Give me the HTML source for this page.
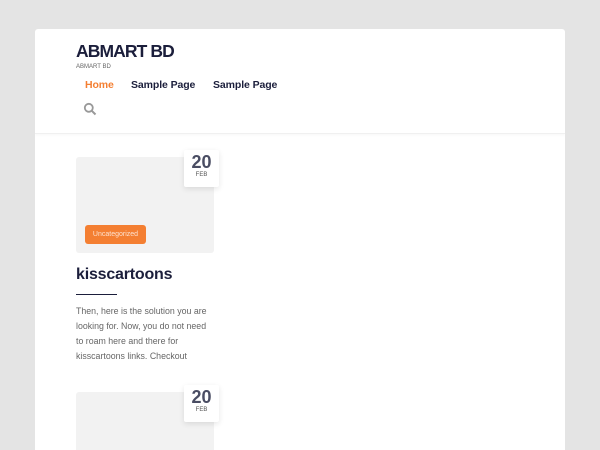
<!DOCTYPE html>
<html><head><style>
*{margin:0;padding:0;box-sizing:border-box}
html,body{width:600px;height:450px;overflow:hidden}
body{background:#e4e4e4;font-family:"Liberation Sans",sans-serif;position:relative}
.box{position:absolute;left:35px;top:29px;width:530px;height:421px;background:#fff;border-radius:3px 3px 0 0;overflow:hidden}
.hdr{position:absolute;left:0;top:0;width:530px;height:105px;border-bottom:1px solid #f0f0f0;box-shadow:0 1px 3px rgba(0,0,0,.04)}
.t{position:absolute;left:41px;top:12px;font-size:17.5px;font-weight:bold;color:#1b1e3b;letter-spacing:-.9px}
.st{position:absolute;left:41px;top:35px;font-size:6px;color:#666}
.nav{position:absolute;top:50px;font-size:10.5px;font-weight:bold;color:#1b1e3b;letter-spacing:-.1px}
.img{position:absolute;left:41px;top:128px;width:138px;height:96px;background:#f2f2f2;border-radius:3px}
.date{position:absolute;left:149px;top:121px;width:35px;height:37px;background:#fff;box-shadow:0 2px 6px rgba(0,0,0,.1);border-radius:2px;text-align:center}
.date b{display:block;font-size:18px;color:#4a4d63;margin-top:3px;line-height:19px}
.date span{display:block;font-size:6px;color:#555}
.cat{position:absolute;left:50px;top:196px;width:61px;height:19px;background:#f47f32;border-radius:3px;color:#fde2d0;font-size:7px;line-height:19px;text-align:center}
h2{position:absolute;left:41px;top:237px;font-size:16px;color:#1b1e3b;letter-spacing:-.2px}
.ln{position:absolute;left:41px;top:265px;width:41px;height:1px;background:#1b1e3b}
p{position:absolute;left:41px;top:275px;width:136px;font-size:8.8px;line-height:15px;color:#666}
</style></head><body>
<div class="box">
<div class="hdr">
<div class="t">ABMART BD</div>
<div class="st">ABMART BD</div>
<div class="nav" style="left:50px;color:#f47f32">Home</div>
<div class="nav" style="left:96px">Sample Page</div>
<div class="nav" style="left:178px">Sample Page</div>
<svg style="position:absolute;left:48px;top:73px" width="14" height="14" viewBox="0 0 14 14"><circle cx="5.8" cy="5.8" r="4" fill="none" stroke="#999" stroke-width="1.8"/><line x1="8.8" y1="8.8" x2="12.5" y2="12.5" stroke="#999" stroke-width="2"/></svg>
</div>
<div class="img"></div>
<div class="date"><b>20</b><span>FEB</span></div>
<div class="cat">Uncategorized</div>
<h2>kisscartoons</h2>
<div class="ln"></div>
<p>Then, here is the solution you are looking for. Now, you do not need to roam here and there for kisscartoons links. Checkout</p>
<div class="img" style="top:363px;height:58px;border-radius:3px 3px 0 0"></div>
<div class="date" style="top:356px"><b>20</b><span>FEB</span></div>
</div>
</body></html>
